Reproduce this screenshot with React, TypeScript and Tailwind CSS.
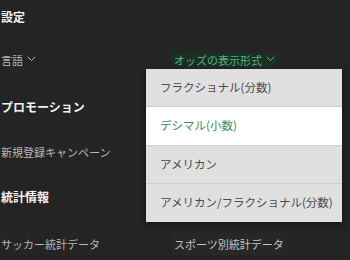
import React from "react";

const Chevron = ({ color }: { color: string }) => (
  <svg width="9" height="6" viewBox="0 0 9 6" className="ml-[4px] mb-[3px]" fill="none">
    <path d="M0.8 0.8 L4.5 4.6 L8.2 0.8" stroke={color} strokeWidth="1" />
  </svg>
);

const font = { fontFamily: '"Noto Sans CJK JP", "Noto Sans", sans-serif' };

export default function App() {
  return (
    <div
      className="relative w-[350px] h-[260px] overflow-hidden bg-[#242424]"
      style={font}
    >
      <div className="flex flex-col pt-[9px] pl-px">
        <div className="h-[16px] leading-[16px] text-[12px] font-bold text-[#f2f2f2]">設定</div>
        <div className="mt-[27px] grid grid-cols-[171px_1fr] h-[16px] items-center">
          <div className="flex items-center text-[11px] leading-[16px] text-[#b8b8b8]">
            言語
            <Chevron color="#b8b8b8" />
          </div>
          <div className="flex">
            <div className="flex items-center bg-[#1b2f25] px-[2px] text-[11px] leading-[15px] text-[#56b282]">
              オッズの表示形式
              <Chevron color="#56b282" />
            </div>
          </div>
        </div>
        <div className="mt-[31px] h-[16px] leading-[16px] text-[12px] font-bold text-[#f2f2f2]">プロモーション</div>
        <div className="mt-[29px] h-[16px] leading-[16px] text-[11px] text-[#b8b8b8]">新規登録キャンペーン</div>
        <div className="mt-[29px] h-[16px] leading-[16px] text-[12px] font-bold text-[#f2f2f2]">統計情報</div>
        <div className="mt-[28px] grid grid-cols-[171px_1fr] h-[16px] items-center">
          <div className="text-[11px] leading-[16px] text-[#b8b8b8]">サッカー統計データ</div>
          <div className="flex">
            <div className="bg-[#272727] px-[2px] py-[3px] text-[11px] leading-[16px] text-[#c4c4c4]">
              スポーツ別統計データ
            </div>
          </div>
        </div>
      </div>

      <div className="absolute left-[146px] top-[69px] w-[196px] flex flex-col bg-[#e0e0e0] shadow-[0_2px_6px_rgba(0,0,0,0.5)] text-[11.5px] text-[#4a4a4a]">
        <div className="h-[38px] flex items-center pl-[14px] border-b border-[#cfcfcf]">フラクショナル(分数)</div>
        <div className="h-[39px] flex items-center pl-[14px] bg-white text-[#3c8d5f] border-b border-[#cfcfcf]">デシマル(小数)</div>
        <div className="h-[38px] flex items-center pl-[14px] border-b border-[#cfcfcf]">アメリカン</div>
        <div className="h-[38px] flex items-center pl-[14px]">アメリカン/フラクショナル(分数)</div>
      </div>
    </div>
  );
}
